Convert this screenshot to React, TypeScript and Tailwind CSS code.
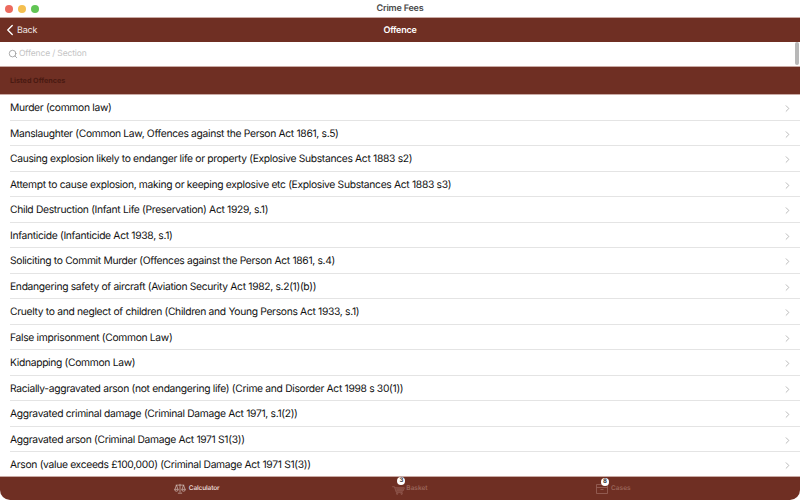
import { ChevronLeft, ChevronRight, Search } from 'lucide-react'

const offences = [
  'Murder (common law)',
  'Manslaughter (Common Law, Offences against the Person Act 1861, s.5)',
  'Causing explosion likely to endanger life or property (Explosive Substances Act 1883 s2)',
  'Attempt to cause explosion, making or keeping explosive etc (Explosive Substances Act 1883 s3)',
  'Child Destruction (Infant Life (Preservation) Act 1929, s.1)',
  'Infanticide (Infanticide Act 1938, s.1)',
  'Soliciting to Commit Murder (Offences against the Person Act 1861, s.4)',
  'Endangering safety of aircraft (Aviation Security Act 1982, s.2(1)(b))',
  'Cruelty to and neglect of children (Children and Young Persons Act 1933, s.1)',
  'False imprisonment (Common Law)',
  'Kidnapping (Common Law)',
  'Racially-aggravated arson (not endangering life) (Crime and Disorder Act 1998 s 30(1))',
  'Aggravated criminal damage (Criminal Damage Act 1971, s.1(2))',
  'Aggravated arson (Criminal Damage Act 1971 S1(3))',
  'Arson (value exceeds £100,000) (Criminal Damage Act 1971 S1(3))',
]

function ScalesIcon() {
  return (
    <svg width="12" height="11" viewBox="0 0 14 13" fill="none" stroke="#d9c6c0" strokeWidth="0.8">
      <path d="M7 1v10M4.5 12h5M2 2.5h10M2.8 2.5 1 7.5M2.8 2.5 4.6 7.5M11.2 2.5 9.4 7.5M11.2 2.5 13 7.5" />
      <path d="M.6 7.5h4.4a2.2 2.2 0 0 1-4.4 0ZM9 7.5h4.4a2.2 2.2 0 0 1-4.4 0Z" />
    </svg>
  )
}

function BasketIcon() {
  return (
    <svg width="13" height="9" viewBox="0 0 14 10" fill="none" stroke="#9a655a" strokeWidth="0.8">
      <path d="M0 .8h2.5l2 6.2h7M3 2h10.5l-1.5 3.6H4.2" />
      <path d="M4.5 3.3h7.5M4.8 4.5h6.8" />
      <circle cx="5.5" cy="8.6" r="0.8" />
      <circle cx="10.5" cy="8.6" r="0.8" />
    </svg>
  )
}

function CasesIcon() {
  return (
    <svg width="12" height="11" viewBox="0 0 12 11" fill="none" stroke="#9a655a" strokeWidth="0.8">
      <path d="M.5 1.5h11v9H.5ZM.5 4.5h11M4.5 6.5h3" />
    </svg>
  )
}

function Badge({ n, className }: { n: number; className: string }) {
  return (
    <span className={`absolute left-[5px] w-[8px] h-[8px] rounded-full bg-white text-[#333] text-[6px] leading-[8px] text-center font-bold ${className}`}>
      {n}
    </span>
  )
}

export default function App() {
  return (
    <div className="h-[500px] w-[800px] bg-white overflow-hidden flex flex-col relative rounded-[10px] font-['Inter',sans-serif] [text-rendering:geometricPrecision]">
      {/* title bar */}
      <div className="h-[17px] shrink-0 bg-white flex items-center justify-center relative">
        <div className="absolute left-[5px] top-[5px] flex gap-[5px]">
          <span className="w-2 h-2 rounded-full bg-[#ec6a5e]" />
          <span className="w-2 h-2 rounded-full bg-[#f4bf4f]" />
          <span className="w-2 h-2 rounded-full bg-[#61c554]" />
        </div>
        <span className="text-[9px] font-semibold text-[#4a4a4a] tracking-[-0.2px]">Crime Fees</span>
      </div>
      {/* nav bar */}
      <div className="h-[25px] shrink-0 bg-[#6f2f23] border-t border-[#c9aaa4] flex items-center relative">
        <div className="absolute left-[1px] flex items-center text-white">
          <ChevronLeft size={18} strokeWidth={1.8} />
          <span className="ml-[-2px] mt-[1px] text-[9px] text-[#f0e6e3] tracking-[-0.2px]">Back</span>
        </div>
        <span className="w-full text-center mt-[1px] text-[9px] font-semibold text-white tracking-[-0.25px]">Offence</span>
      </div>
      {/* search */}
      <div className="h-[24px] shrink-0 bg-white flex items-center pl-[8px] gap-[1px] relative">
        <Search size={10} className="text-[#9a9a9a]" />
        <span className="mt-[1px] text-[8.5px] text-[#c4c4c4] tracking-[-0.15px]">Offence / Section</span>
        <div className="absolute right-[1px] top-0 w-[4px] h-[23px] rounded-full bg-[#b8b8b8]" />
      </div>
      {/* section header */}
      <div className="h-[29px] shrink-0 bg-[#6f2f23] border-y border-[#c9aaa4] flex items-center pl-[10px] pt-[2px]">
        <span className="text-[7.2px] font-bold text-[#4a1a12]">Listed Offences</span>
      </div>
      {/* list */}
      <div className="flex-1 min-h-0 overflow-hidden">
        {offences.map((o) => (
          <div key={o} className="h-[25.5px] flex items-center pl-[10px] pt-[2px] relative">
            <span className="text-[10.3px] text-[#111] whitespace-nowrap tracking-[-0.32px]">{o}</span>
            <ChevronRight size={11} strokeWidth={2} className="absolute right-[7px] text-[#b5b5b5]" />
            <div className="absolute left-[10px] right-0 bottom-0 h-px bg-[#e4e4e4]" />
          </div>
        ))}
      </div>
      {/* tab bar */}
      <div className="h-[24px] shrink-0 bg-[#6f2f23] border-t border-[#c9aaa4] flex px-[85px] text-[6.5px] font-semibold">
        <div className="flex-1 flex items-center justify-center gap-[3px] pl-[10px] text-[#e5d5d1]">
          <ScalesIcon />
          <span className="mt-[1px] tracking-[-0.15px]">Calculator</span>
        </div>
        <div className="flex-1 flex items-center justify-center gap-[1px] pl-[10px] text-[#9a655a]">
          <span className="relative flex mt-[3px]">
            <BasketIcon />
            <Badge n={3} className="-top-[9px]" />
          </span>
          <span className="mt-[1px]">Basket</span>
        </div>
        <div className="flex-1 flex items-center justify-center gap-[3px] text-[#9a655a]">
          <span className="relative flex">
            <CasesIcon />
            <Badge n={8} className="-top-[5px]" />
          </span>
          <span className="mt-[1px]">Cases</span>
        </div>
      </div>
    </div>
  )
}
